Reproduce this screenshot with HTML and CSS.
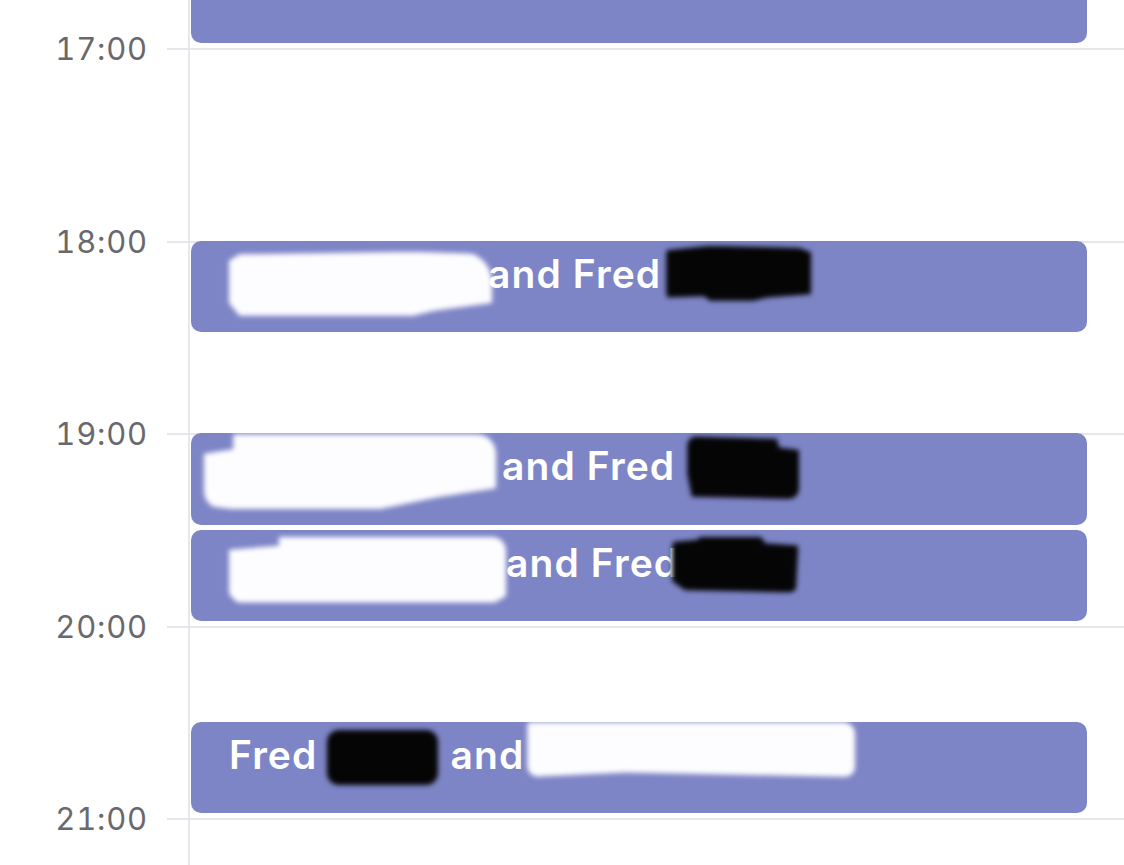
FILE: index.html
```html
<!DOCTYPE html>
<html lang="en">
  <head>
    <meta charset="UTF-8" />
    <meta name="viewport" content="width=device-width, initial-scale=1.0" />
    <title>Day</title>
    <link rel="stylesheet" href="styles.css">
  </head>
  <body>
    <div class="schedule">
      <div class="hour row-2"><span class="hour-label">17:00</span><span class="hour-rule"></span></div>
      <div class="hour row-4"><span class="hour-label">18:00</span><span class="hour-rule"></span></div>
      <div class="hour row-6"><span class="hour-label">19:00</span><span class="hour-rule"></span></div>
      <div class="hour row-8"><span class="hour-label">20:00</span><span class="hour-rule"></span></div>
      <div class="hour row-10"><span class="hour-label">21:00</span><span class="hour-rule"></span></div>
      <div class="spine"></div>

      <div class="event row-1"></div>

      <div class="event row-4">
        <span class="blot white w-1"><i></i></span>
        <span class="name n-1">and Fred</span>
        <span class="blot black k-1"><i></i></span>
      </div>

      <div class="event row-6">
        <span class="blot white w-2"><i></i></span>
        <span class="name n-2">and Fred</span>
        <span class="blot black k-2"><i></i></span>
      </div>

      <div class="event row-7">
        <span class="blot white w-3"><i></i></span>
        <span class="name n-3">and Fred</span>
        <span class="blot black k-3"><i></i></span>
      </div>

      <div class="event row-9">
        <span class="name">Fred</span>
        <span class="blot black k-4"><i></i></span>
        <span class="name n-4">and</span>
        <span class="blot white w-4"><i></i></span>
      </div>
    </div>
  </body>
</html>
```

FILE: styles.css
```css
html, body {
  margin: 0;
  height: 100%;
  overflow: hidden;
  background: #fff;
}

body {
  font-family: Inter, "Noto Sans", sans-serif;
}

.schedule {
  display: grid;
  grid-template-columns: 188px 1fr;
  grid-template-rows: repeat(11, 96.25px);
  margin-top: -48px;
}

/* hour lines */
.hour {
  grid-column: 1 / -1;
  display: grid;
  grid-template-columns: 167px 1fr;
  align-items: start;
}

.hour-label {
  text-align: right;
  padding-right: 19px;
  margin-top: -17px;
  font-size: 31px;
  letter-spacing: 0.8px;
  line-height: 36px;
  font-variant-numeric: tabular-nums;
  color: #69696d;
}

.hour-rule {
  border-top: 2px solid #e7e7eb;
}

.spine {
  grid-column: 2;
  grid-row: 1 / -1;
  border-left: 2px solid #e7e7eb;
}

.row-1 { grid-row: 1; }
.row-2 { grid-row: 2 / span 2; }
.row-4 { grid-row: 4; }
.row-6 { grid-row: 6; }
.row-7 { grid-row: 7; }
.row-8 { grid-row: 8 / span 2; }
.row-10 { grid-row: 10 / span 2; }
.row-9 { grid-row: 9; }
.hour.row-4 { grid-row: 4 / span 2; }
.hour.row-6 { grid-row: 6 / span 2; }

/* events */
.event {
  grid-column: 2;
  margin: 0 37px 5px 3px;
  background: #7e85c6;
  border-radius: 10px;
  display: flex;
  align-items: flex-start;
  padding-left: 38px;
  overflow: hidden;
}

.name {
  font-size: 39px;
  font-weight: 600;
  letter-spacing: 1.1px;
  line-height: 46px;
  margin-top: 10px;
  color: #fff;
  white-space: nowrap;
}

.blot {
  position: relative;
  z-index: 1;
  flex-shrink: 0;
  filter: blur(2.5px);
}

.blot i {
  display: block;
  width: 100%;
  height: 100%;
}

.white i {
  background: #fdfdff;
}

.black i {
  background: #050506;
}

/* redaction marks */
.w-1 { width: 263px; height: 64px; margin-top: 11px; margin-right: -4px; }
.w-1 i { border-radius: 6px 30px 12px 10px; clip-path: polygon(0 14%, 4% 4%, 70% 0, 100% 4%, 100% 80%, 78% 92%, 70% 100%, 4% 100%, 0 80%); }
.k-1 { width: 145px; height: 55px; margin-top: 5px; margin-left: 5px; }
.k-1 i { border-radius: 8px; clip-path: polygon(0 8%, 30% 0, 92% 4%, 100% 12%, 100% 88%, 70% 94%, 60% 100%, 30% 100%, 26% 92%, 0 94%); }

.n-2 { margin-left: 6px; }
.w-2 { width: 292px; height: 75px; margin-top: 1px; margin-left: -25px; }
.w-2 i { border-radius: 4px 20px 10px 18px; clip-path: polygon(10% 0, 96% 0, 100% 8%, 100% 72%, 80% 84%, 60% 100%, 10% 100%, 0 95%, 0 26%, 10% 20%); }
.k-2 { width: 112px; height: 63px; margin-top: 3px; margin-left: 12px; }
.k-2 i { border-radius: 10px; clip-path: polygon(0 0, 80% 4%, 82% 18%, 100% 22%, 100% 100%, 4% 96%, 0 60%); }

.w-3 { width: 277px; height: 66px; margin-top: 7px; }
.w-3 i { border-radius: 6px 14px 8px 12px; clip-path: polygon(18% 0, 97% 0, 100% 8%, 100% 90%, 96% 100%, 3% 100%, 0 88%, 0 20%, 18% 14%); }
.k-3 { width: 126px; height: 56px; margin-top: 7px; margin-left: -7px; }
.k-3 i { border-radius: 10px; clip-path: polygon(0 10%, 20% 6%, 22% 0, 70% 0, 74% 12%, 100% 16%, 98% 100%, 10% 96%, 0 80%); }

.k-4 { width: 111px; height: 55px; margin-top: 8px; margin-left: 10px; }
.k-4 i { border-radius: 12px; }
.n-4 { margin-left: 12px; }
.w-4 { width: 328px; height: 55px; margin-top: 0; margin-left: 3px; }
.w-4 i { border-radius: 4px 12px 10px 12px; clip-path: polygon(0 0, 100% 0, 100% 100%, 30% 92%, 0 100%); }
```
